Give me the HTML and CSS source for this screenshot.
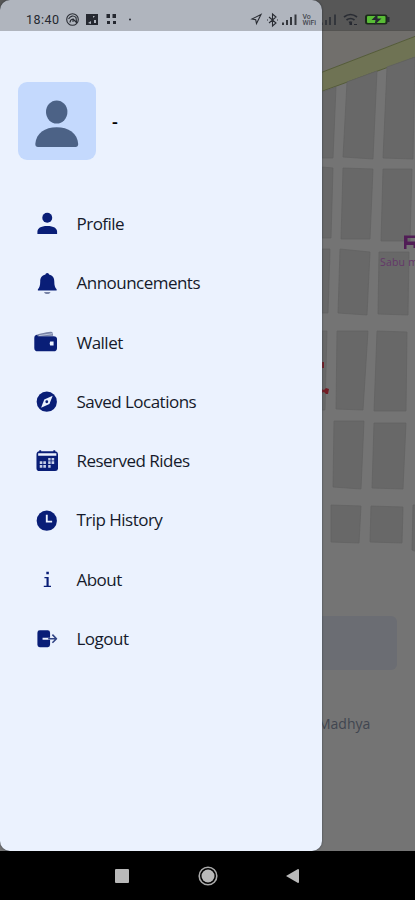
FILE: index.html
```html
<!DOCTYPE html>
<html lang="en">
<head>
<meta charset="utf-8">
<title>Menu</title>
<link rel="stylesheet" href="styles.css">
</head>
<body>
<div class="phone">
  <div class="backdrop">
    <svg class="map" viewBox="0 0 415 851">
      <path class="land" d="M322 30H415V36L322 72Z"/>
      <path class="highway" d="M320 73L416 36V57L320 92Z"/>
      <g class="blocks">
        <path d="M322 92L336 87L333 158H322ZM347 82L377 71L373 159L343 157ZM387 67L415 57L413 159L383 158Z"/>
        <path d="M322 167L333 168L331 238H322ZM343 168L373 169L370 239H341ZM383 169H412L410 241H381Z"/>
        <path d="M322 249H330L328 313H322ZM340 249L370 252L367 315L338 313ZM379 252H409L408 315L378 314Z"/>
        <path d="M322 331H327L325 410H322ZM337 331H368L363 410L336 409ZM377 331L407 332L406 411H374Z"/>
        <path d="M334 421H364L361 489L333 487ZM374 423H406L403 489L372 488Z"/>
        <path d="M331 505L361 506L359 543L331 542ZM371 506L403 507L402 543L370 542ZM413 505H417V552L412 550Z"/>
      </g>
      <path class="hotel" d="M404 235.500H416V248H413.500V245H406.500V249H404ZM407.500 238V241.500H416V238Z"/>
      <text class="map-label" x="380" y="266">Sabu m</text>
      <path class="marker" d="M321 362h3v6h-3zM321 389l3 1 2-2 3 1-1 5h-2l-2-2-3 1z"/>
      <rect class="field" x="260" y="616" width="137" height="54" rx="6"/>
      <text class="address" x="318" y="728.500">Madhya</text>
    </svg>
  </div>
  <aside class="drawer">
    <header class="account">
      <div class="avatar">
        <svg width="44" height="48" viewBox="0 0 44 48"><ellipse cx="21.700" cy="12" rx="10.700" ry="11.500"/><path d="M3 47Q.3 47 .3 44C1 33 10 27.200 21.700 27.200S42.500 33 43.200 44Q43.200 47 40.500 47Z"/></svg>
      </div>
      <span class="account-name">-</span>
    </header>
    <nav class="menu">
      <a class="item"><svg class="icon" viewBox="0 0 24 24"><circle cx="12" cy="6.200" r="5.300"/><path d="M1.500 23.500V21c0-3.800 3.500-6.200 10.500-6.200s10.500 2.400 10.500 6.200v2.500Z"/></svg><span>Profile</span></a>
      <a class="item"><svg class="icon" viewBox="0 0 24 24"><path d="M12 1c1.200 0 1.800.8 1.900 1.700C18 3.700 19.500 6.500 19.500 10c0 4.500.8 6.500 2.500 8.500v1.300H2v-1.300c1.700-2 2.500-4 2.500-8.500C4.500 6.500 6 3.700 10.100 2.700 10.200 1.800 10.800 1 12 1Z"/><path class="soft" d="M8.500 21.300h7c-.6 1.500-1.800 2.400-3.500 2.400s-2.900-.9-3.500-2.400Z"/></svg><span>Announcements</span></a>
      <a class="item"><svg class="icon wallet" viewBox="0 0 24 24"><path class="soft" d="M1.500 6.500C2 4 5 3.300 17 1.500c2-.2 2.500 1.500 2.500 4Z"/><path class="cutline" d="M5 5.500L19 3.500"/><path fill-rule="evenodd" d="M3 4.500Q.3 5 .3 8v10q0 3.500 3.700 3.500h16q3.500 0 3.500-3.500V9q0-3-3.500-3H4ZM16.500 11.500h3.500v4h-3.500q-1-2 0-4Z"/></svg><span>Wallet</span></a>
      <a class="item"><svg class="icon" viewBox="0 0 24 24"><circle cx="11.500" cy="12.500" r="10.800"/><path class="cut" d="M17.800 6.200L14.300 15 5.400 18.800 8.800 10Z"/><circle cx="11.500" cy="12.500" r="1.500"/></svg><span>Saved Locations</span></a>
      <a class="item"><svg class="icon" viewBox="0 0 24 24"><path fill-rule="evenodd" d="M3.500 2.500V1.300h2v1.200h13V1.300h2v1.200Q23.500 2.700 23.500 6v14.500q0 3-3 3h-17q-3 0-3-3V6q0-3.300 3-3.500ZM2.300 4.500v2.800h19.400V4.500Z"/><path class="grid" d="M4 13h2.800v3H4zM7.800 13h2.800v3H7.800zM4 17h2.800v3H4zM7.800 17h2.800v3H7.800zM13 9.500h2.600v2.700H13zM16.600 9.500h2.800v2.700h-2.800zM13 13h2.600v3H13zM16.600 13h2.800v3h-2.800zM13 17h2.600v3H13z"/></svg><span>Reserved Rides</span></a>
      <a class="item"><svg class="icon" viewBox="0 0 24 24"><circle cx="11.500" cy="12.500" r="10.800"/><path class="line-cut" d="M11.500 6V13.500h5.700"/></svg><span>Trip History</span></a>
      <a class="item"><svg class="icon" viewBox="0 0 24 24"><path d="M11 4h2.700v2.600H11zM9 9.500h4.500v9.300H16v1.500H8.300v-1.500h2.900V11H9Z"/></svg><span>About</span></a>
      <a class="item"><svg class="icon" viewBox="0 0 24 24"><path d="M4 3.500h8.500q2.500 0 2.500 2.500V11.500H7v2h8V19q0 2.500-2.500 2.500H4Q1.500 21.500 1.500 19V6Q1.500 3.500 4 3.500Z"/><path class="arrow" d="M13 12.500h9M17.500 8.200l4.300 4.300-4.300 4.300"/></svg><span>Logout</span></a>
    </nav>
  </aside>
  <div class="statusbar">
    <time>18:40</time>
    <svg class="status-icons" viewBox="66 0 349 31">
      <g class="line"><circle cx="72.500" cy="19.500" r="5.800"/><path d="M68.500 19q3.500-5 7.500-1.500l.5 4.500M70 22.500q0-3 3-3.500v3M73 19l4 4"/></g>
      <path fill-rule="evenodd" d="M86 14h12v11H86ZM88 23l3-2v3ZM93 16h2l-2 2ZM94 20h2v3h-2Z"/>
      <path d="M106.500 14h3.500v4h-3.500zM112.500 14h3.500v4h-3.500zM107 21h3v3h-3zM113 21h3v3h-3z"/><circle cx="130" cy="19.500" r="1"/>
      <g class="line"><path d="M252 19l9-4.500-4.500 9-.8-3.700zM269 17l7 6-3.500 3V14l3.500 3-7 6M267 20h1M277 20h1"/></g>
      <path class="signal" d="M282 22.500h2V25h-2zM286 20h2v5h-2zM290 17h2v8h-2zM294.500 14.500h2V25h-2zM322 22.500h1V25h-1zM325 20h2v5h-2zM329 17h2v8h-2zM334 14.500h2V25h-2z"/>
      <text x="302.500" y="18.500">Vo</text><text x="302.500" y="25">WiFi</text>
      <g class="line wifi"><path d="M344 17q6.500-5 13 0M346.500 20q4-3 8 0M349 22.500q1.500-1 3 0"/></g>
      <path d="M349.500 22.500h2.500V25h-2.500zM354 24h3v1h-3z"/>
      <rect class="battery-edge" x="365" y="14.500" width="22.500" height="10" rx="2.500"/><path d="M387 17h2.500v5H387z"/><rect class="battery" x="367" y="16" width="18.500" height="7" rx="1"/><path d="M377.500 14l-6 6h4l-1 5 7-6.500h-4z"/>
    </svg>
  </div>
  <footer class="navbar">
    <svg width="14" height="14" viewBox="0 0 14 14"><rect width="14" height="14" rx="1"/></svg>
    <svg width="20" height="20" viewBox="0 0 20 20"><circle cx="10" cy="10" r="6.500"/><circle class="ring" cx="10" cy="10" r="8.800"/></svg>
    <svg width="13" height="14" viewBox="0 0 13 14"><path d="M0 7L12 0Q13 0 13 1V13Q13 14 12 14Z"/></svg>
  </footer>
</div>
</body>
</html>
```
FILE: styles.css
```css
* { box-sizing: border-box; }
body { margin: 0; background: #000; font-family: "Open Sans", "Noto Sans", sans-serif; }
.phone {
  display: grid;
  grid-template-columns: 322px 1fr;
  grid-template-rows: 31px 820px 49px;
  width: 415px;
  height: 900px;
  overflow: hidden;
}
.backdrop { grid-area: 1 / 1 / 3 / 3; background: #747474; }
.map { display: block; width: 415px; height: 851px; }
.land { fill: #716f6c; }
.highway { fill: #6f7354; stroke: #555c39; stroke-width: 1; }
.blocks { fill: #686868; stroke: #616161; stroke-width: .7; }
.hotel { fill: #511d56; fill-rule: evenodd; }
.map-label { fill: #643769; font-size: 10.500px; letter-spacing: .2px; }
.marker { fill: #721d25; }
.field { fill: #6b6d73; }
.address { fill: #414650; font-size: 14px; }
.drawer {
  grid-area: 1 / 1 / 3 / 2;
  padding: 82px 18px 0;
  background: #ebf2fe;
  border-radius: 10px;
  box-shadow: 0 0 2px #333b46;
}
.account { display: flex; align-items: center; gap: 16px; height: 78px; }
.avatar {
  display: flex;
  align-items: center;
  justify-content: center;
  width: 78px;
  height: 78px;
  padding-top: 5px;
  border-radius: 9px;
  background: #c4d9fd;
}
.avatar svg { fill: #4c6286; }
.account-name { color: #000; font-size: 18px; font-weight: 600; }
.menu { display: grid; grid-auto-rows: 59.250px; margin-top: 34px; padding-left: 17px; }
.item {
  display: flex;
  align-items: center;
  gap: 18px;
  color: #151a2b;
  font-size: 17px;
  letter-spacing: -.52px;
  white-space: nowrap;
}
.icon { width: 22.500px; height: 22.500px; margin: 0 .250px 0 .750px; fill: #091e77; }
.wallet { width: 23.500px; height: 24px; margin: 0 .750px 0 -.750px; }
.soft { fill: #7883a6; }
.cut { fill: #ebf2fe; }
.grid { fill: #c6d0e8; }
.cutline { fill: none; stroke: #bcc7df; stroke-width: 1; }
.line-cut { fill: none; stroke: #ebf2fe; stroke-width: 2; }
.arrow { fill: none; stroke: #304384; stroke-width: 1.700; }
.item path.arrow { stroke-linejoin: round; }
.statusbar {
  grid-area: 1 / 1 / 2 / 3;
  z-index: 1;
  display: flex;
  align-items: center;
  padding-left: 26px;
  background: rgba(0, 0, 0, .25);
}
.statusbar time { width: 40px; padding-top: 8px; color: #252830; font: 400 12.500px Roboto, sans-serif; letter-spacing: .5px; }
.status-icons { width: 349px; height: 31px; fill: #252830; }
.status-icons .signal { fill: #33363c; }
.status-icons .line { fill: none; stroke: #292c33; stroke-width: 1.100; }
.status-icons .wifi { stroke-width: 1.700; }
.status-icons text { fill: #454850; font: 500 7px Roboto, sans-serif; }
.status-icons .battery-edge { fill: #1b2b19; }
.status-icons .battery { fill: #58bc36; }
.navbar {
  grid-area: 3 / 1 / 4 / 3;
  display: flex;
  align-items: center;
  gap: 69px;
  padding-left: 115px;
  background: #000;
}
.navbar svg { fill: #b9b9b9; }
.navbar svg:last-child { margin-left: -1px; }
.navbar .ring { fill: none; stroke: #aaa; stroke-width: 1.600; }
```
